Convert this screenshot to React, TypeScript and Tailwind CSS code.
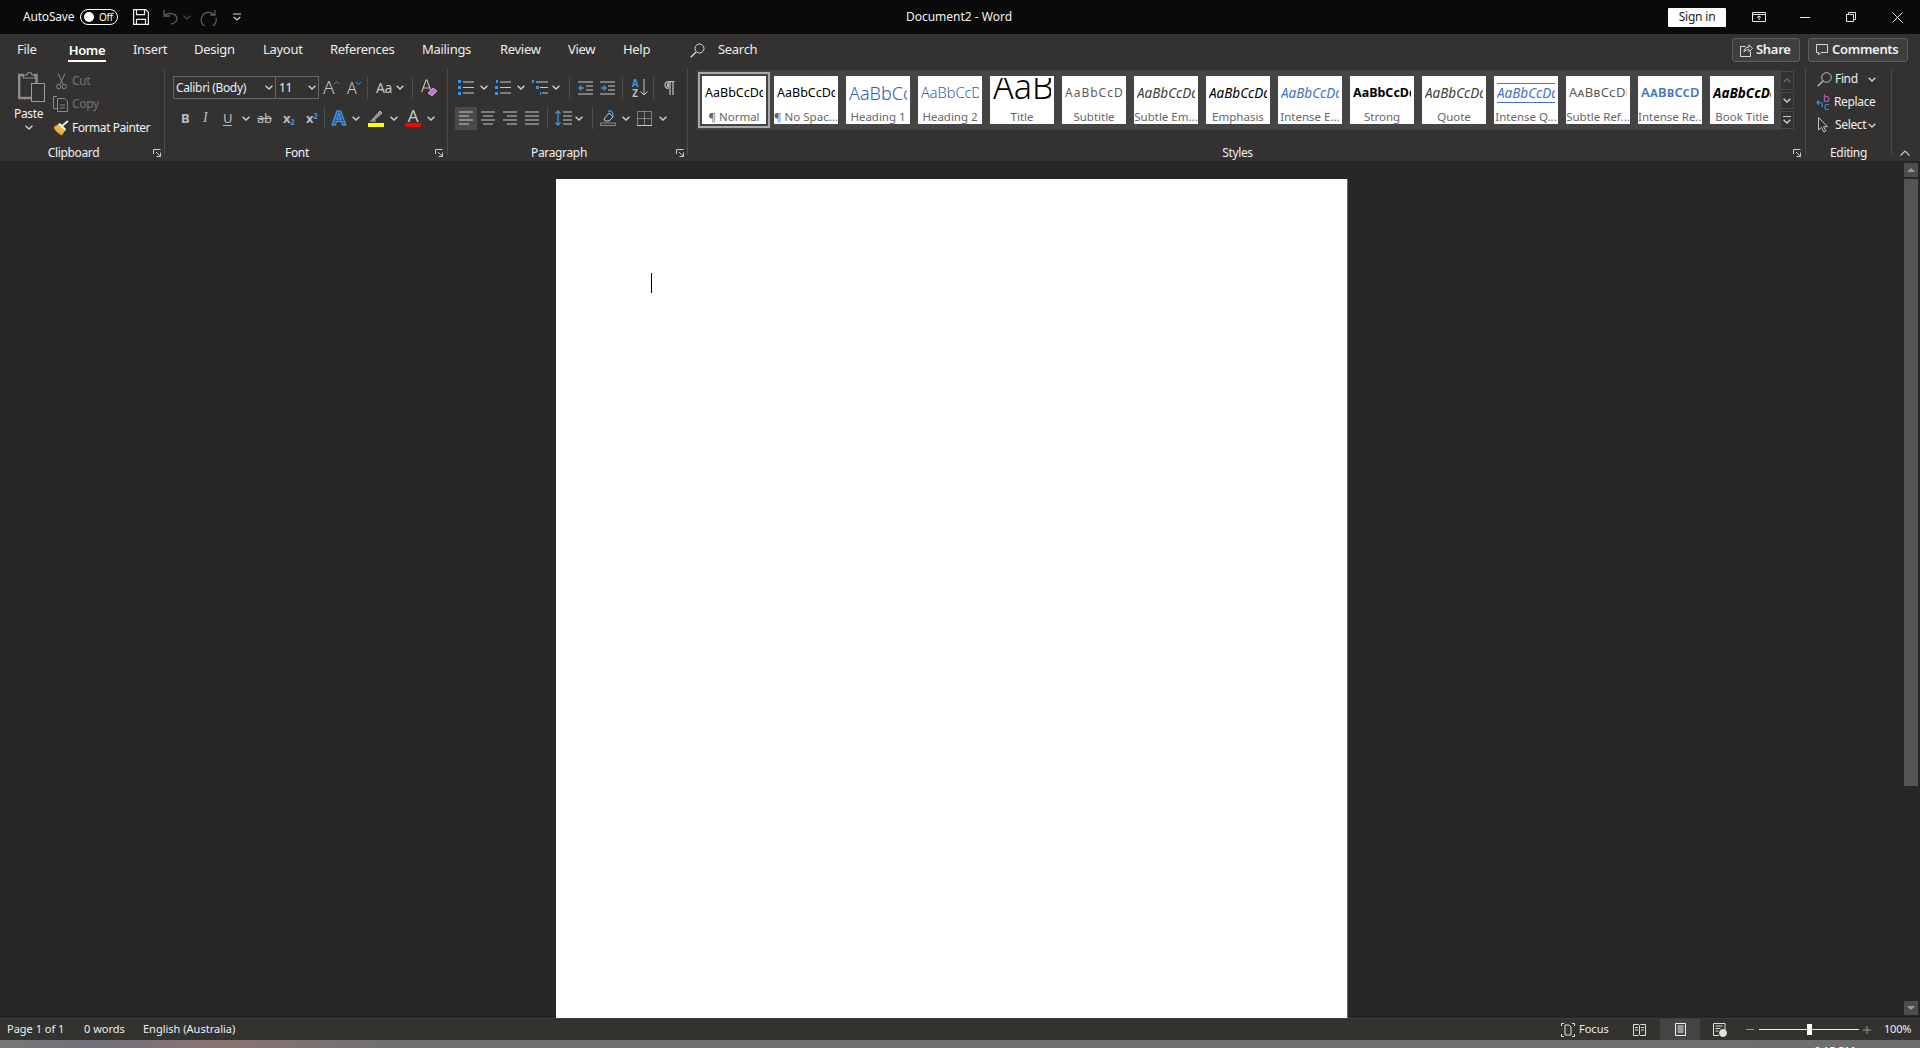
import React from "react";

const S = "#c8c8c8";
const Blue = "#3a96dd";

const Chev = ({ className = "" }: { className?: string }) => (
  <svg width="8" height="5" viewBox="0 0 8 5" className={`shrink-0 ${className}`} fill="none" stroke="#d0d0d0" strokeWidth="1.4">
    <path d="M.6.7 4 4 7.4.7" />
  </svg>
);

const Launcher = () => (
  <svg width="8" height="8" viewBox="0 0 8 8" className="shrink-0" fill="none" stroke="#c8c8c8" strokeWidth="1">
    <path d="M.5 5V.5H7.5M7.5 7.5 3 3M7.5 3.5V7.5H3.5" />
  </svg>
);

const Sep = () => <div className="w-px h-[87px] bg-[#4a4a4a] shrink-0" />;
const VSep = ({ className = "" }: { className?: string }) => <div className={`w-px h-[22px] bg-[#4f4f4f] shrink-0 ${className}`} />;

function Lines({ kind }: { kind: "left" | "center" | "right" | "justify" }) {
  const rows = {
    left: ["M0 1h14", "M0 5h10", "M0 9h14", "M0 13h10"],
    center: ["M0 1h14", "M2 5h10", "M0 9h14", "M2 13h10"],
    right: ["M0 1h14", "M4 5h10", "M0 9h14", "M4 13h10"],
    justify: ["M0 1h14", "M0 5h14", "M0 9h14", "M0 13h14"],
  }[kind];
  return (
    <svg width="14" height="14" viewBox="0 0 14 14" className="shrink-0" fill="none" stroke={S} strokeWidth="1">
      {rows.map((d) => <path key={d} d={d} />)}
    </svg>
  );
}

const Label = ({ children, launcher = true, r = "pr-[3px]" }: { children: React.ReactNode; launcher?: boolean; r?: string }) => (
  <div className={`h-[16px] flex items-center ${launcher ? r : ""}`}>
    <div className="flex-1 text-center text-[12px] leading-[16px] text-[#f0f0f0]">{children}</div>
    {launcher && <div className="ml-[6px] flex"><Launcher /></div>}
  </div>
);

const styles = [
  { label: "¶ Normal", prev: "AaBbCcDd", cls: "text-[12.5px] text-black" },
  { label: "¶ No Spac...", prev: "AaBbCcDd", cls: "text-[12.5px] text-black" },
  { label: "Heading 1", prev: "AaBbCc", cls: "text-[18px] text-[#2f5ea8] font-light" },
  { label: "Heading 2", prev: "AaBbCcD", cls: "text-[14.5px] text-[#2f5ea8] font-light" },
  { label: "Title", prev: "AaB", cls: "text-[34px] text-black font-light leading-[34px] -mt-[14px]" },
  { label: "Subtitle", prev: "AaBbCcD", cls: "text-[12px] text-[#5a5a5a] tracking-[1px]" },
  { label: "Subtle Em...", prev: "AaBbCcDd", cls: "text-[13.5px] italic text-[#404040]" },
  { label: "Emphasis", prev: "AaBbCcDd", cls: "text-[13.5px] italic text-black" },
  { label: "Intense E...", prev: "AaBbCcDd", cls: "text-[13.5px] italic text-[#4472c4]" },
  { label: "Strong", prev: "AaBbCcDd", cls: "text-[12.5px] font-bold text-black" },
  { label: "Quote", prev: "AaBbCcDd", cls: "text-[13.5px] italic text-[#404040]" },
  { label: "Intense Q...", prev: "AaBbCcDd", cls: "text-[13.5px] italic text-[#4472c4]", lines: true },
  { label: "Subtle Ref...", prev: "AaBbCcDd", cls: "text-[13px] text-[#5a5a5a] [font-variant-caps:small-caps] tracking-[0.3px]" },
  { label: "Intense Re...", prev: "AaBbCcDd", cls: "text-[13px] font-semibold text-[#4472c4] [font-variant-caps:small-caps] tracking-[0.4px]" },
  { label: "Book Title", prev: "AaBbCcDd", cls: "text-[13.5px] italic font-bold text-black" },
];

const tabs: [string, string][] = [
  ["Insert", "w-[61px]"], ["Design", "w-[69px]"], ["Layout", "w-[67px]"],
  ["References", "w-[92px]"], ["Mailings", "w-[78px]"], ["Review", "w-[68px]"], ["View", "w-[55px]"], ["Help", "w-[67px]"],
];

export default function App() {
  return (
    <div className="w-[1920px] h-[1048px] overflow-hidden flex flex-col bg-[#262626] text-white font-['Noto_Sans',sans-serif]">
      {/* Title bar */}
      <div className="h-[34px] bg-[#0a0a0a] flex items-center shrink-0 text-[12px] tracking-[-0.2px]">
        <span className="ml-[23px] w-[57px] text-[#f2f2f2]">AutoSave</span>
        <div className="w-[38px] h-[16px] rounded-full border border-white flex items-center pl-[3px]">
          <div className="w-[10px] h-[10px] rounded-full bg-white" />
          <span className="ml-[5px] text-[10px] leading-none tracking-[-0.3px]">Off</span>
        </div>
        <svg width="16" height="16" viewBox="0 0 16 16" className="ml-[15px]" fill="none" stroke="#f0f0f0" strokeWidth="1.200">
          <path d="M.6.6h12l2.800 2.800v12H.6zM3.500.6v5h8v-5M3.500 15.400v-5h9v5" />
        </svg>
        <svg width="15" height="16" viewBox="0 0 15 16" className="ml-[14px]" fill="none" stroke="#5c5c5c" strokeWidth="1.300">
          <path d="M1 1v6h6M1 7c3-4 12-3 13 2 .5 3-3 6-6 6" />
        </svg>
        <Chev className="ml-[5px] opacity-30" />
        <svg width="17" height="17" viewBox="0 0 17 17" className="ml-[9px]" fill="none" stroke="#5c5c5c" strokeWidth="1.300">
          <path d="M15 1v5h-5M14 5.500A7.500 7.500 0 1 0 16 9" />
        </svg>
        <svg width="8" height="8" viewBox="0 0 8 8" className="ml-[16px]" fill="none" stroke="#d8d8d8" strokeWidth="1.200">
          <path d="M0 1h8M.7 4 4 7 7.300 4" />
        </svg>
        <div className="ml-[664px] w-[108px] text-center text-[#f2f2f2] whitespace-nowrap tracking-normal">Document2 - Word</div>
        <div className="ml-[655px] w-[58px] h-[19px] rounded-[1px] bg-white text-[#222] flex items-center justify-center">Sign in</div>
        <svg width="14" height="10" viewBox="0 0 14 10" className="ml-[26px]" fill="none" stroke="#e8e8e8" strokeWidth="1">
          <path d="M.5.500h13v9H.5zM.5 2.500h13M7 8V4M5 5.500 7 4l2 1.500" />
        </svg>
        <div className="ml-[34px] w-[10px] h-px bg-[#e8e8e8]" />
        <svg width="10" height="10" viewBox="0 0 10 10" className="ml-[36px]" fill="none" stroke="#e8e8e8" strokeWidth="1">
          <path d="M.5 2.500h7v7h-7zM2.500 2.500v-2h7v7h-2" />
        </svg>
        <svg width="11" height="11" viewBox="0 0 11 11" className="ml-[36px]" fill="none" stroke="#e8e8e8" strokeWidth="1">
          <path d="M.5.500l10 10M10.500.500l-10 10" />
        </svg>
      </div>

      {/* Tabs */}
      <div className="h-[34px] bg-[#333231] flex items-center shrink-0 text-[13px] text-[#ececec] tracking-[-0.3px]">
        <div className="ml-[17px] w-[51px] flex items-center -mt-[2px]">File</div>
        <div className="w-[65px] h-full flex flex-col">
          <div className="w-[38px] h-[26px] flex items-center justify-center pt-[6px] font-semibold text-white leading-[18px]">Home</div>
          <div className="w-[38px] h-[2px] bg-white" />
        </div>
        {tabs.map(([t, w]) => (
          <div key={t} className={`${w} shrink-0 -mt-[2px]`}>{t}</div>
        ))}
        <svg width="15" height="15" viewBox="0 0 15 15" className="-mt-[1px]" fill="none" stroke="#d8d8d8" strokeWidth="1">
          <circle cx="9.500" cy="5.500" r="4.500" />
          <path d="M6 9 .7 14.300" strokeWidth="1.300" />
        </svg>
        <span className="ml-[13px] -mt-[2px]">Search</span>
        <div className="ml-auto flex items-center -mt-[2px]">
          <div className="w-[68px] h-[24px] rounded-[3px] border border-[#5e5e5e] bg-[#3f3f3f] flex items-center pl-[7px]">
            <svg width="13" height="13" viewBox="0 0 13 13" fill="none" stroke="#d8d8d8" strokeWidth="1">
              <path d="M5.500 2.500H.5v10h10v-5M4 8c0-3 2-5 5-5V.8l3.500 3.500L9 7.800V5.500C7 5.500 5 6 4 8z" />
            </svg>
            <span className="ml-[3px] font-semibold text-[13px] text-[#f0f0f0]">Share</span>
          </div>
          <div className="ml-[8px] mr-[12px] w-[100px] h-[24px] rounded-[3px] border border-[#5e5e5e] bg-[#3f3f3f] flex items-center pl-[7px]">
            <svg width="12" height="12" viewBox="0 0 12 12" fill="none" stroke="#d8d8d8" strokeWidth="1">
              <path d="M.5.500h11v8H5L2.500 11V8.500h-2z" />
            </svg>
            <span className="ml-[4px] font-semibold text-[13px] text-[#f0f0f0]">Comments</span>
          </div>
        </div>
      </div>

      {/* Ribbon */}
      <div className="h-[93px] bg-[#333231] flex items-start shrink-0 text-[12px] text-[#f0f0f0] tracking-[-0.35px]">
        {/* Clipboard */}
        <div className="w-[164px] h-full flex flex-col shrink-0">
          <div className="h-[77px] flex">
            <div className="w-[53px] pl-[18px] pt-[4px] flex flex-col">
              <svg width="28" height="31" viewBox="0 0 28 31" fill="none">
                <path d="M6 3H1.200v23H13" stroke="#8c8c8c" strokeWidth="2.400" />
                <path d="M16 3h2.500v8" stroke="#8c8c8c" strokeWidth="2.400" />
                <path d="M5.500 6V3H9a2.500 2.500 0 0 1 5 0h3v3z" stroke="#8c8c8c" strokeWidth="1.200" />
                <rect x="13.500" y="11.500" width="13" height="18" stroke="#9c9c9c" strokeWidth="1" />
              </svg>
              <div className="w-[22px] -ml-[4px] mt-[3px] leading-[16px] text-center">Paste</div>
              <div className="flex justify-center w-[22px] mt-[3px]"><Chev /></div>
            </div>
            <div className="flex flex-col">
              <div className="h-[22px] mt-[2px] flex items-center text-[#737373]">
                <svg width="11" height="17" viewBox="0 0 11 17" className="ml-[3px]" fill="none" stroke="#8a8a8a" strokeWidth="1">
                  <path d="M2 .5 7 11M9 .5 4 11" />
                  <circle cx="2.800" cy="13.500" r="2.200" />
                  <circle cx="8.200" cy="13.500" r="2.200" />
                </svg>
                <span className="ml-[5px]">Cut</span>
              </div>
              <div className="h-[24px] flex items-center text-[#737373]">
                <svg width="16" height="16" viewBox="0 0 16 16" fill="none" stroke="#8a8a8a" strokeWidth="1">
                  <path d="M4 .5H.5v12H5M4.500 2.500h7l3 3v10h-10zM7 9h5M7 12h5" />
                </svg>
                <span className="ml-[3px]">Copy</span>
              </div>
              <div className="h-[22px] mt-px flex items-center">
                <svg width="16" height="16" viewBox="0 0 16 16" fill="none">
                  <path d="M1 7l5-3 6 6-3 5C6 14 2 11 1 7z" fill="#f0b43c" stroke="#d08a28" strokeWidth="1" />
                  <path d="M5 4l2-1 6 6-1 2z" fill="#f2f2f2" />
                  <path d="M9 6l6-5" stroke="#e8e8e8" strokeWidth="2" />
                </svg>
                <span className="ml-[3px] whitespace-nowrap tracking-[-0.45px]">Format Painter</span>
              </div>
            </div>
          </div>
          <Label>Clipboard</Label>
        </div>
        <Sep />

        {/* Font */}
        <div className="w-[282px] h-full flex flex-col shrink-0">
          <div className="h-[77px] pt-[8px] pl-[8px] flex flex-col">
            <div className="h-[23px] flex items-center">
              <div className="w-[103px] h-[23px] border border-[#666] flex items-center pl-[2px] pr-[2px] justify-between text-[12px] text-[#e8f0f8]">
                <span className="whitespace-nowrap">Calibri (Body)</span><Chev />
              </div>
              <div className="w-[43px] h-[23px] border border-l-0 border-[#666] flex items-center pl-[3px] pr-[2px] justify-between text-[#e8f0f8]">
                <span>11</span><Chev />
              </div>
              <div className="ml-[4px] w-[16px] flex items-start">
                <span className="w-[11px] text-[19px] leading-none text-[#c4c4c4] font-light">A</span>
                <svg width="5" height="3" viewBox="0 0 5 3" className="mt-[3px]" fill="none" stroke={Blue}><path d="M0 3 2.500.5 5 3" /></svg>
              </div>
              <div className="ml-[8px] w-[14px] flex items-start">
                <span className="w-[9px] text-[16px] leading-none text-[#c4c4c4] font-light">A</span>
                <svg width="5" height="3" viewBox="0 0 5 3" className="mt-[2px]" fill="none" stroke={Blue}><path d="M0 0 2.500 2.500 5 0" /></svg>
              </div>
              <VSep className="ml-[6px]" />
              <span className="ml-[8px] text-[14px] text-[#c8c8c8] w-[15px] whitespace-nowrap">Aa</span>
              <Chev className="ml-[5px]" />
              <VSep className="ml-[8px]" />
              <svg width="17" height="18" viewBox="0 0 17 18" className="ml-[8px]" fill="none">
                <path d="M.7 13 5 1h1l4.300 12M2.500 9h6" stroke="#c0c0c0" strokeWidth="1.100" />
                <path d="M7 14l5-5 4 3-5 5z" fill="#b977c8" stroke="#d79ae0" />
              </svg>
            </div>
            <div className="h-[24px] mt-[7px] flex items-center text-[#bcbcbc]">
              <span className="ml-[8px] w-[8px] text-[13px] font-bold leading-none">B</span>
              <span className="ml-[14px] w-[6px] text-[14px] italic leading-none font-['Liberation_Serif',serif]">I</span>
              <span className="ml-[14px] w-[10px] text-[13px] leading-none underline underline-offset-2">U</span>
              <Chev className="ml-[9px]" />
              <span className="ml-[7px] w-[16px] text-[13px] leading-none line-through">ab</span>
              <span className="ml-[10px] w-[12px] text-[13px] font-bold leading-none whitespace-nowrap">x<sub className="text-[8px] text-[#3a96dd] align-baseline">2</sub></span>
              <span className="ml-[11px] w-[11px] text-[13px] font-bold leading-none whitespace-nowrap">x<sup className="text-[8px] text-[#3a96dd]">2</sup></span>
              <VSep className="ml-[7px]" />
              <span className="ml-[7px] w-[16px] text-[20px] font-bold leading-none text-[#1f5fa8] [-webkit-text-stroke:1px_#4aa0e8]">A</span>
              <Chev className="ml-[4px]" />
              <div className="ml-[8px] w-[16px] flex flex-col items-center">
                <svg width="14" height="12" viewBox="0 0 14 12" fill="none">
                  <path d="M3 10 11 1l2 2-8 7z" stroke="#b8b8b8" fill="#8a8a8a" />
                  <path d="M1 11h6" stroke="#b8b8b8" />
                </svg>
                <div className="w-[16px] h-[4px] bg-[#ffff00] mt-[1px]" />
              </div>
              <Chev className="ml-[6px]" />
              <div className="ml-[7px] w-[16px] flex flex-col items-center">
                <span className="text-[17px] leading-[13px] text-[#c8c8c8]">A</span>
                <div className="w-[16px] h-[4px] bg-[#ff0000] mt-[1px]" />
              </div>
              <Chev className="ml-[6px]" />
            </div>
          </div>
          <Label r="pr-[4px]">Font</Label>
        </div>
        <Sep />

        {/* Paragraph */}
        <div className="w-[239px] h-full flex flex-col shrink-0">
          <div className="h-[77px] pt-[8px] flex flex-col">
            <div className="h-[23px] flex items-center">
              <svg width="16" height="15" viewBox="0 0 16 15" className="ml-[10px]" fill="none" stroke={S}>
                <path d="M5 2h11M5 7.500h11M5 13h11" />
                <path d="M0 0h3v3H0zM0 6h3v3H0zM0 12h3v3H0z" fill={Blue} stroke="none" />
              </svg>
              <Chev className="ml-[6px]" />
              <svg width="16" height="15" viewBox="0 0 16 15" className="ml-[7px]" fill="none" stroke={S}>
                <path d="M5 2h11M5 7.500h11M5 13h11" />
                <path d="M1 0h2v3H1zM0 6h3v3H0zM0 12h3v3H0z" fill={Blue} stroke="none" />
              </svg>
              <Chev className="ml-[6px]" />
              <svg width="16" height="15" viewBox="0 0 16 15" className="ml-[7px]" fill="none" stroke={S}>
                <path d="M4 2h12M8 7.500h8M10 13h6" />
                <path d="M0 0h2v3H0zM4 6h3v3H4zM8 12h1v3H8z" fill={Blue} stroke="none" />
              </svg>
              <Chev className="ml-[4px]" />
              <VSep className="ml-[9px]" />
              <svg width="15" height="14" viewBox="0 0 15 14" className="ml-[8px]" fill="none" stroke={S}>
                <path d="M0 1h15M8 5h7M8 9h7M0 13h15" />
                <path d="M6 7H1M3.500 4.500 1 7l2.500 2.500" stroke={Blue} strokeWidth="1.300" />
              </svg>
              <svg width="15" height="14" viewBox="0 0 15 14" className="ml-[7px]" fill="none" stroke={S}>
                <path d="M0 1h15M8 5h7M8 9h7M0 13h15" />
                <path d="M1 7h5M3.500 4.500 6 7 3.500 9.500" stroke={Blue} strokeWidth="1.300" />
              </svg>
              <VSep className="ml-[7px]" />
              <div className="ml-[7px] w-[10px] flex flex-col items-center text-[10px] font-bold leading-[10px]">
                <span className="text-[#3a96dd]">A</span>
                <span className="text-[#c0c0c0]">Z</span>
              </div>
              <svg width="8" height="17" viewBox="0 0 8 17" fill="none" stroke={S}><path d="M4 0v16M.5 12.500 4 16l3.500-3.500" /></svg>
              <VSep className="ml-[5px]" />
              <svg width="11" height="14" viewBox="0 0 11 14" className="ml-[10px]" fill="none" stroke="#b8b8b8" strokeWidth="1.300">
                <path d="M4.500 7.500a3.500 3.500 0 0 1 0-7h6M6 0v14M9 0v14" />
                <path d="M5 1.200a3 3 0 0 0 0 5.800z" fill="#b8b8b8" stroke="none" />
              </svg>
            </div>
            <div className="h-[24px] mt-[7px] flex items-center">
              <div className="ml-[7px] w-[22px] h-[23px] bg-[#4a4a4a] flex items-center justify-center"><Lines kind="left" /></div>
              <div className="ml-[4px]"><Lines kind="center" /></div>
              <div className="ml-[8px]"><Lines kind="right" /></div>
              <div className="ml-[8px]"><Lines kind="justify" /></div>
              <VSep className="ml-[8px]" />
              <svg width="17" height="16" viewBox="0 0 17 16" className="ml-[7px]" fill="none" stroke={S}>
                <path d="M8 2h9M8 6h9M8 10h9M8 14h9" />
                <path d="M3 1v14M.5 3.500 3 1l2.500 2.500M.5 12.500 3 15l2.500-2.500" stroke={Blue} strokeWidth="1.300" />
              </svg>
              <Chev className="ml-[3px]" />
              <VSep className="ml-[9px]" />
              <svg width="16" height="16" viewBox="0 0 16 16" className="ml-[7px]" fill="none" stroke={S}>
                <path d="M4 9l5-6 4 4-4 4H5z" />
                <path d="M8 1h2c3 1 3 3 3 6" stroke={Blue} strokeWidth="1.500" />
                <path d="M.5 13h15v2.500H.5z" stroke="#8a8a8a" />
              </svg>
              <Chev className="ml-[6px]" />
              <svg width="15" height="15" viewBox="0 0 15 15" className="ml-[7px]" fill="none" stroke={S} strokeDasharray="1 1">
                <path d="M.5 .5h14v14H.5zM7.500 .5v14M.5 7.500h14" />
                <path d="M0 14.500h15" strokeDasharray="none" />
              </svg>
              <Chev className="ml-[7px]" />
            </div>
          </div>
          <Label>Paragraph</Label>
        </div>
        <Sep />

        {/* Styles */}
        <div className="w-[1117px] h-full flex flex-col shrink-0">
          <div className="h-[77px] pt-[2px] pl-[9px] flex items-start">
            <div className="w-[1083px] h-[60px] bg-[#444] flex items-center pl-px shrink-0">
              {styles.map((s, i) => (
                <div key={s.label} className={`w-[72px] h-[56px] p-[4px] shrink-0 ${i === 0 ? "outline-2 -outline-offset-2 outline-[#a8a8a8]" : ""}`}>
                  <div className="w-[64px] h-[48px] bg-white flex flex-col overflow-hidden tracking-normal">
                    <div className="h-[30px] mt-[2px] mx-[3px] overflow-hidden whitespace-nowrap flex items-center">
                      {s.lines ? (
                        <div className="w-[58px] h-[20px] border-y border-[#4472c4] flex items-center overflow-hidden">
                          <span className={s.cls}>{s.prev}</span>
                        </div>
                      ) : (
                        <span className={s.cls}>{s.prev}</span>
                      )}
                    </div>
                    <div className="h-[16px] text-center text-[11.5px] leading-[17px] text-[#666] whitespace-nowrap">{s.label}</div>
                  </div>
                </div>
              ))}
            </div>
            <div className="flex flex-col gap-[2px] w-[14px] mt-px shrink-0">
              <div className="h-[19px] border border-[#484848] flex items-center justify-center">
                <svg width="8" height="5" viewBox="0 0 8 5" fill="none" stroke="#666" strokeWidth="1.400"><path d="M.6 4.300 4 1l3.400 3.300" /></svg>
              </div>
              <div className="h-[17px] border border-[#484848] flex items-center justify-center"><Chev /></div>
              <div className="h-[18px] border border-[#484848] flex flex-col gap-[2px] items-center justify-center">
                <div className="w-[8px] h-px bg-[#d0d0d0]" /><Chev />
              </div>
            </div>
          </div>
          <Label r="pr-[4px]">Styles</Label>
        </div>
        <Sep />

        {/* Editing */}
        <div className="w-[85px] h-full flex flex-col shrink-0">
          <div className="h-[77px] pt-px flex flex-col">
            <div className="h-[20px] flex items-center">
              <svg width="15" height="15" viewBox="0 0 15 15" className="ml-[11px]" fill="none" stroke="#c0c0c0">
                <circle cx="9.500" cy="5.500" r="4.800" />
                <path d="M6 9 .7 14.300" strokeWidth="1.300" />
              </svg>
              <span className="ml-[3px] w-[33px]">Find</span>
              <Chev />
            </div>
            <div className="h-[24px] mt-px flex items-center">
              <svg width="15" height="17" viewBox="0 0 15 17" className="ml-[10px]" fill="none" stroke={Blue} strokeWidth="1.200">
                <path d="M3 6.500 1 8.500l2 2M1 8.500h3c2 0 3 2 2 4.500" />
                <text x="7" y="8" fontSize="11" fill="#c060c8" stroke="none" fontFamily="Noto Sans">b</text>
                <text x="8" y="16" fontSize="11" fill={Blue} stroke="none" fontFamily="Noto Sans">c</text>
              </svg>
              <span className="ml-[3px]">Replace</span>
            </div>
            <div className="h-[22px] flex items-center">
              <svg width="11" height="16" viewBox="0 0 11 16" className="ml-[12px]" fill="none" stroke="#c0c0c0">
                <path d="M.5.500v12.500l3-2.500 2.500 4.500 2-1-2.500-4.300h4z" />
              </svg>
              <span className="ml-[6px] w-[33px]">Select</span>
              <Chev />
            </div>
          </div>
          <Label launcher={false}>Editing</Label>
        </div>
        <Sep />
        <div className="flex-1 h-full flex items-end justify-center pb-[5px] pr-[2px]">
          <svg width="10" height="6" viewBox="0 0 10 6" fill="none" stroke="#c8c8c8" strokeWidth="1.200"><path d="M.5 5.500 5 1l4.500 4.500" /></svg>
        </div>
      </div>

      {/* Document area */}
      <div className="flex-1 min-h-0 flex bg-[#262626]">
        <div className="flex-1 min-w-0 overflow-hidden pl-[556px] pt-[18px]">
          <div className="w-[792px] h-full bg-white pl-[95px] pt-[94px] border-r border-[#666]">
            <div className="w-px h-[20px] bg-black" />
          </div>
        </div>
        <div className="w-[14px] mr-[2px] mt-[2px] mb-[3px] flex flex-col shrink-0">
          <div className="h-[14px] bg-[#4d4d4d] flex items-center justify-center">
            <div className="w-0 h-0 border-x-[4px] border-x-transparent border-b-[4px] border-b-[#9a9a9a]" />
          </div>
          <div className="h-[607px] mt-[2px] bg-[#555]" />
          <div className="flex-1" />
          <div className="h-[14px] bg-[#4d4d4d] flex items-center justify-center">
            <div className="w-0 h-0 border-x-[4px] border-x-transparent border-t-[4px] border-t-[#9a9a9a]" />
          </div>
        </div>
      </div>

      {/* Status bar */}
      <div className="h-[22px] bg-[#33322f] flex items-center shrink-0 text-[11px] text-[#eeeeee] border-t border-[#3d3d3d]">
        <span className="ml-[7px] w-[77px]">Page 1 of 1</span>
        <span className="w-[59px]">0 words</span>
        <span>English (Australia)</span>
        <div className="ml-auto flex items-center h-full">
          <svg width="14" height="14" viewBox="0 0 14 14" fill="none" stroke="#e0e0e0">
            <path d="M.5 3V.5H3M11 .5h2.500V3M13.500 11v2.500H11M3 13.500H.5V11M4 2h4l2 2v8H4z" />
          </svg>
          <span className="ml-[4px] w-[54px]">Focus</span>
          <svg width="13" height="12" viewBox="0 0 13 12" fill="none" stroke="#e0e0e0"><path d="M.5.500h5l1 1 1-1h5v11h-5l-1-1-1 1h-5zM6.500 1.500v9M2 3.500h3M2 6h3M8 3.500h3M8 6h3" /></svg>
          <div className="ml-[14px] w-[40px] h-full bg-[#454545] flex items-center justify-center">
            <svg width="11" height="13" viewBox="0 0 11 13" fill="none" stroke="#f0f0f0"><path d="M.5.500h10v12H.5zM2.500 3h6M2.500 5h6M2.500 7h6M2.500 9h6" /></svg>
          </div>
          <svg width="14" height="14" viewBox="0 0 14 14" className="ml-[13px]" fill="none" stroke="#e0e0e0"><path d="M12 7V.5H.5v12H6M2.500 3h7M2.500 5.500h5M2.500 8h3" /><circle cx="10" cy="10" r="3.500" fill="#e0e0e0" /></svg>
          <div className="ml-[19px] w-[8px] h-px bg-[#9a9a9a]" />
          <div className="ml-[5px] w-[100px] h-px bg-[#e8e8e8] flex items-center">
            <div className="ml-[48px] w-[5px] h-[11px] bg-white shrink-0" />
          </div>
          <svg width="8" height="8" viewBox="0 0 8 8" className="ml-[4px]" fill="none" stroke="#9a9a9a"><path d="M0 4h8M4 0v8" /></svg>
          <span className="ml-[13px] mr-[9px] w-[27px] tracking-[-0.2px]">100%</span>
        </div>
      </div>

      {/* Desktop strip */}
      <div className="h-[8px] shrink-0 overflow-hidden bg-[linear-gradient(90deg,#777_0%,#6f7078_5%,#8a7473_11%,#707070_20%,#6e6e6e_100%)] flex justify-end text-[11px] leading-[14px] text-white">
        <span className="mt-[4px] mr-[65px]">6:15 PM</span>
      </div>
    </div>
  );
}
